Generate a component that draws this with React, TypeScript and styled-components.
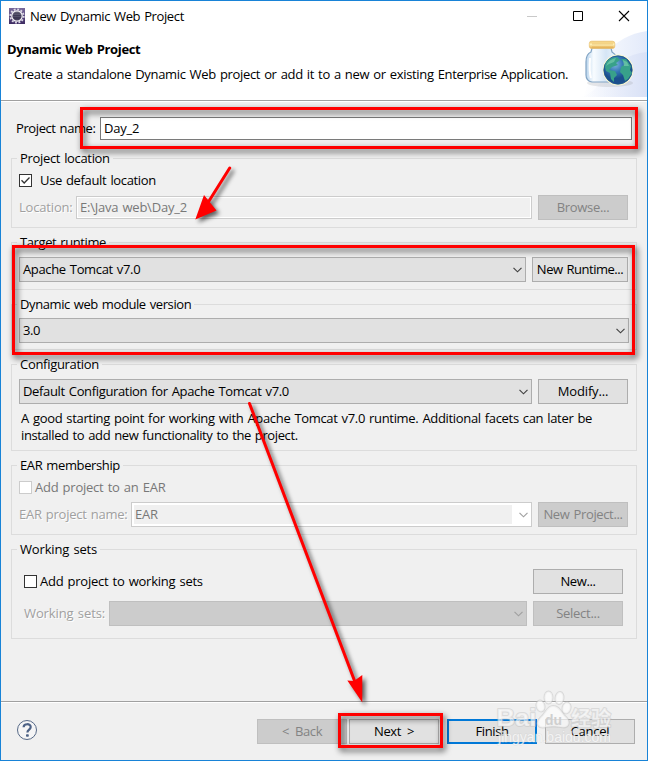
import React from "react";
import styled, { createGlobalStyle, css } from "styled-components";

const GlobalStyle = createGlobalStyle`
  * { box-sizing: border-box; }
  body { margin: 0; background: #f0f0f0; }
`;

const Window = styled.div`
  position: relative;
  display: flex;
  flex-direction: column;
  width: 648px;
  height: 761px;
  border: 1px solid #1883d7;
  background: #f0f0f0;
  color: #000;
  font: 13px/17px "Open Sans", "Noto Sans", sans-serif;
  word-spacing: 1px;
  overflow: hidden;
`;

const tracking = (value = -0.2) => `${(value - 0.18).toFixed(3)}px`;

const Text = styled.span<{ $track?: number }>`
  white-space: nowrap;
  letter-spacing: ${(p) => tracking(p.$track)};
`;

const TitleBar = styled.header`
  display: flex;
  align-items: center;
  height: 30px;
  flex: none;
  padding: 0 17px 0 8px;
  gap: 5px;
  background: #fff;
`;

const WindowControls = styled.div`
  display: flex;
  gap: 34px;
  margin: -1px 0 0 auto;
`;

const RowEnd = styled.div`
  display: flex;
  margin-left: auto;
`;

const Banner = styled.section`
  display: flex;
  justify-content: space-between;
  height: 69px;
  flex: none;
  background: #fff;
`;

const BannerCopy = styled.div`
  display: flex;
  flex-direction: column;
  padding: 10px 0 0 6px;
  gap: 8px;
`;

const Heading = styled.h1`
  margin: 0;
  font-size: 13px;
  line-height: 17px;
  font-weight: 700;
  letter-spacing: -0.36px;
`;

const Summary = styled(Text)`
  padding-left: 7px;
`;

const Rule = styled.div`
  height: 2px;
  flex: none;
  background: #fff;
  border-top: 1px solid #a0a0a0;
`;

const Body = styled.main`
  display: flex;
  flex-direction: column;
  flex: 1;
  padding: 15px 10px 0;
  gap: 14px;
`;

const NameRow = styled.div`
  display: flex;
  align-items: center;
  height: 23px;
  flex: none;
  margin-bottom: 4px;
  padding: 0 5px;
`;

const NameLabel = styled(Text)`
  width: 84px;
`;

const Field = styled.div<{ $disabled?: boolean }>`
  display: flex;
  align-items: center;
  flex: 1;
  height: 23px;
  padding-left: 3px;
  border: 1px solid ${(p) => (p.$disabled ? "#ccc" : "#7a7a7a")};
  background: ${(p) => (p.$disabled ? "#f0f0f0" : "#fff")};
  ${(p) =>
    p.$disabled &&
    css`
      color: #787878;
      box-shadow: inset 0 0 0 1px #fff;
    `}
`;

const Group = styled.section<{ $height: number; $inset?: string }>`
  display: flex;
  flex-direction: column;
  flex: none;
  width: 626px;
  height: ${(p) => p.$height}px;
  padding: ${(p) => p.$inset ?? "0 8px 0 7px"};
  border: 1px solid #dcdcdc;
`;

const Legend = styled.h2<{ $pull?: number; $track?: number }>`
  align-self: flex-start;
  margin: -10px 0 0 ${(p) => p.$pull ?? -2}px;
  padding: 0 3px;
  background: #f0f0f0;
  font-size: 13px;
  font-weight: 400;
  line-height: 18px;
  white-space: nowrap;
  letter-spacing: ${(p) => tracking(p.$track)};
`;

const Row = styled.div<{ $top: number; $height?: number; $gap?: number }>`
  display: flex;
  align-items: center;
  flex: none;
  height: ${(p) => p.$height ?? 25}px;
  margin-top: ${(p) => p.$top}px;
  gap: ${(p) => p.$gap ?? 6}px;
`;

const EmbossedLabel = styled(Text)<{ $width: number }>`
  flex: none;
  width: ${(p) => p.$width}px;
  color: #a0a0a0;
  text-shadow: 1px 1px 0 #fff;
`;

const CheckBox = styled.span<{ $disabled?: boolean }>`
  display: flex;
  width: 13px;
  height: 13px;
  flex: none;
  border: 1px solid ${(p) => (p.$disabled ? "#ccc" : "#333")};
  background: #fff;
`;

const CheckLabel = styled(Text)<{ $disabled?: boolean }>`
  color: ${(p) => (p.$disabled ? "#787878" : "#000")};
`;

const Select = styled.div<{ $disabled?: boolean }>`
  display: flex;
  align-items: center;
  justify-content: space-between;
  flex: 1;
  height: 25px;
  padding: 0 3px;
  border: 1px solid ${(p) => (p.$disabled ? "#bfbfbf" : "#adadad")};
  background: ${(p) => (p.$disabled ? "#ccc" : "#e1e1e1")};
`;

const EditableSelect = styled(Select)`
  padding: 2px 3px 2px 2px;
  border-color: #ccc;
  background: #fff;
`;

const EditArea = styled.div`
  display: flex;
  align-items: center;
  width: 378px;
  height: 19px;
  padding: 0 0 1px 1px;
  background: #f0f0f0;
  color: #787878;
`;

const Button = styled.button<{ $width?: number; $default?: boolean; $track?: number; $wide?: boolean }>`
  display: flex;
  align-items: center;
  justify-content: center;
  flex: none;
  width: ${(p) => p.$width ?? 90}px;
  height: 25px;
  padding: 0;
  border: ${(p) => (p.$default ? "2px solid #0078d7" : "1px solid #adadad")};
  border-radius: 0;
  background: #e1e1e1;
  color: #000;
  font: inherit;
  white-space: nowrap;
  word-spacing: ${(p) => (p.$wide ? 3 : 1)}px;
  letter-spacing: ${(p) => tracking(p.$track)};
  &:disabled {
    border-color: #bfbfbf;
    background: #ccc;
    color: #838383;
  }
`;

const Description = styled.p`
  display: flex;
  flex-direction: column;
  margin: 6px 0 0;
  padding-left: 2px;
`;

const Footer = styled.footer`
  display: flex;
  align-items: flex-start;
  justify-content: space-between;
  height: 57px;
  flex: none;
  padding: 16px 12px 0 15px;
`;

const FooterButtons = styled.div`
  display: flex;
  gap: 8px;
`;

const StepButtons = styled.div`
  display: flex;
  gap: 2px;
`;

const Highlight = styled.div<{ $x: number; $y: number; $w: number; $h: number }>`
  position: absolute;
  left: ${(p) => p.$x - 1}px;
  top: ${(p) => p.$y - 1}px;
  width: ${(p) => p.$w}px;
  height: ${(p) => p.$h}px;
  border: 3px solid #f00;
  filter: drop-shadow(2px 3px 3px rgba(0, 0, 0, 0.75));
  pointer-events: none;
`;

const Overlay = styled.svg`
  position: absolute;
  left: -1px;
  top: -1px;
  word-spacing: 0;
  pointer-events: none;
`;

const Arrows = styled(Overlay)`
  filter: drop-shadow(3px 3px 2px rgba(0, 0, 0, 0.6));
`;

const Chevron = ({ muted }: { muted?: boolean }) => (
  <svg width="9" height="6" viewBox="0 0 9 6" fill="none" stroke={muted ? "#a0a0a0" : "#404040"} strokeWidth="1.15">
    <path d="M.5.8 4.5 4.8 8.5.8" />
  </svg>
);

const AppIcon = () => (
  <svg width="16" height="16" viewBox="0 0 16 16">
    <defs>
      <linearGradient id="app" x2="0" y2="1">
        <stop stopColor="#786a9c" />
        <stop offset="1" stopColor="#3d2b62" />
      </linearGradient>
      <linearGradient id="core" x2="0" y2="1">
        <stop stopColor="#777589" />
        <stop offset=".5" stopColor="#282441" />
        <stop offset="1" stopColor="#514b69" />
      </linearGradient>
    </defs>
    <rect width="16" height="16" fill="url(#app)" />
    <circle cx="8" cy="8" r="6.7" fill="none" stroke="#ddd9e6" strokeWidth="1.8" strokeDasharray="1.9 1.61" />
    <circle cx="8" cy="8" r="5.2" fill="url(#core)" stroke="#f2f0f5" strokeWidth="1.3" />
    <path d="M4 6.8h8M3.8 8.7h8.4" stroke="#8c88a0" strokeWidth=".5" />
  </svg>
);

const BannerArt = () => (
  <svg width="72" height="66" viewBox="575 31 72 66">
    <defs>
      <linearGradient id="sky" x1="0" x2="1">
        <stop stopColor="#fff" />
        <stop offset="1" stopColor="#e3eafa" />
      </linearGradient>
      <linearGradient id="sky2" x1="0" x2="1">
        <stop stopColor="#eef2fc" stopOpacity="0" />
        <stop offset="1" stopColor="#d9e1f6" />
      </linearGradient>
      <linearGradient id="glass" x1="0" x2="1">
        <stop stopColor="#b9d4ec" />
        <stop offset=".25" stopColor="#f8fcff" />
        <stop offset=".65" stopColor="#d5e5f5" />
        <stop offset="1" stopColor="#eef7ff" />
      </linearGradient>
      <linearGradient id="lid" x2="0" y2="1">
        <stop stopColor="#f0c56a" />
        <stop offset=".45" stopColor="#fff0b3" />
        <stop offset="1" stopColor="#e4ab4c" />
      </linearGradient>
      <radialGradient id="sea" cx=".4" cy=".3">
        <stop stopColor="#7fb4df" />
        <stop offset=".55" stopColor="#3477b5" />
        <stop offset="1" stopColor="#1b4f8d" />
      </radialGradient>
    </defs>
    <path d="M583 97C595 62 612 36 647 31V97Z" fill="url(#sky)" />
    <path d="M580 97C603 94 607 55 647 52V97Z" fill="url(#sky2)" />
    <ellipse cx="610" cy="83" rx="23" ry="4" fill="#777" opacity=".16" />
    <path d="M592 48H611L612 52C617 55 617 59 617 64V77Q616 82 609 82H592Q586 81 586 75V62Q586 54 591 52Z" fill="url(#glass)" stroke="#83a5c5" strokeWidth="1.2" />
    <path d="M590 58Q589 72 591 78" fill="none" stroke="#fff" strokeWidth="2" />
    <rect x="589.3" y="41.2" width="25.5" height="7.3" rx="2.3" fill="url(#lid)" stroke="#e9c271" strokeWidth=".7" />
    <path d="M592 44H613M592 47H613" stroke="#d89e3c" strokeWidth=".7" opacity=".65" />
    <circle cx="618" cy="70" r="15.4" fill="#faf7cf" />
    <circle cx="618" cy="70" r="14.2" fill="url(#sea)" stroke="#1d568c" strokeWidth=".8" />
    <path d="M605 67Q605 60 612 58L617 57 620 60 616 63 618 65 612 67 609 70 615 71 617 75 614 78 614 82 611 79 610 73 606 71ZM621 59 626 59 631 66 630 70 632 73 628 79 625 81 623 75 620 72 621 67 625 64Z" fill="#38a18a" />
    <path d="M606 66Q609 59 616 58L614 62 609 64ZM623 60 627 62 629 66 624 66Z" fill="#7bd0af" opacity=".65" />
  </svg>
);

const HelpIcon = () => (
  <svg width="22" height="22" viewBox="0 0 22 22" fill="none">
    <circle cx="11" cy="11" r="9.5" fill="#f5f5f6" stroke="#566987" />
    <path d="M7.6 8.3C7.7 4.2 14.7 4.3 14.7 8 14.7 10.6 11.4 10.6 11.4 13.6" stroke="#4d6286" strokeWidth="2.2" />
    <rect x="10" y="15.3" width="2.8" height="2.4" rx=".8" fill="#4d6286" />
  </svg>
);

const Watermark = () => (
  <Overlay width="648" height="761" viewBox="0 0 648 761">
    <g fill="#fff" fillOpacity=".6" stroke="#c4c4c4" strokeOpacity=".5" strokeWidth="2" strokeLinejoin="round" paintOrder="stroke">
      <text x="496.5" y="725.5" fontFamily="Liberation Sans, sans-serif" fontWeight="700" fontSize="24.5" textLength="40" lengthAdjust="spacingAndGlyphs">Bai</text>
      <ellipse cx="540.5" cy="706" rx="4" ry="5.5" transform="rotate(-15 540.5 706)" />
      <ellipse cx="548.5" cy="697.5" rx="4" ry="6" />
      <ellipse cx="559.5" cy="698" rx="4" ry="6" transform="rotate(8 559.5 698)" />
      <ellipse cx="566.5" cy="708" rx="4" ry="5.5" transform="rotate(15 566.5 708)" />
      <path d="M553 706C547 706 546 713 541 717 534 724 539 729 546 727 552 726 555 726 561 727 569 729 571 722 566 717 561 713 560 706 553 706Z" />
      <text x="571" y="726" fontFamily="Noto Sans CJK SC, sans-serif" fontWeight="700" fontSize="20" textLength="40">经验</text>
    </g>
    <text x="545" y="724.5" fontFamily="Liberation Sans, sans-serif" fontWeight="700" fontSize="15" fill="#cfcfcf" textLength="17" lengthAdjust="spacingAndGlyphs">du</text>
    <text x="498" y="741.5" fontFamily="Liberation Sans, sans-serif" fontSize="14" fill="#fff" fillOpacity=".7" stroke="#ccc" strokeOpacity=".4" strokeWidth="1" paintOrder="stroke" textLength="113">jingyan.baidu.com</text>
  </Overlay>
);

export default function App() {
  return (
    <>
      <GlobalStyle />
      <Window>
        <TitleBar>
          <AppIcon />
          <Text>New Dynamic Web Project</Text>
          <WindowControls>
            <svg width="12" height="12" viewBox="0 0 12 12"><path d="M1 6.5h10" stroke="#c9c9c9" /></svg>
            <svg width="12" height="12" viewBox="0 0 12 12"><path d="M1.5 1.5h9v9h-9z" fill="none" stroke="#000" /></svg>
            <svg width="12" height="12" viewBox="0 0 12 12"><path d="m1 1 10 10M11 1 1 11" stroke="#000" strokeWidth="1.1" /></svg>
          </WindowControls>
        </TitleBar>
        <Banner>
          <BannerCopy>
            <Heading>Dynamic Web Project</Heading>
            <Summary $track={-0.154}>Create a standalone Dynamic Web project or add it to a new or existing Enterprise Application.</Summary>
          </BannerCopy>
          <BannerArt />
        </Banner>
        <Rule />

        <Body>
          <NameRow>
            <NameLabel $track={-0.22}>Project name:</NameLabel>
            <Field><Text $track={-0.05}>Day_2</Text></Field>
          </NameRow>

          <Group $height={70}>
            <Legend $track={-0.15}>Project location</Legend>
            <Row $top={5} $height={17} $gap={8}>
              <CheckBox>
                <svg width="11" height="11" viewBox="0 0 11 11"><path d="M1.5 5.2 4.2 8 9.5 2.5" fill="none" stroke="#333" strokeWidth="1.3" /></svg>
              </CheckBox>
              <CheckLabel $track={-0.16}>Use default location</CheckLabel>
            </Row>
            <Row $top={6}>
              <EmbossedLabel $width={51} $track={0}>Location:</EmbossedLabel>
              <Field $disabled><Text $track={-0.04}>E:\Java web\Day_2</Text></Field>
              <Button disabled $track={-0.12}>Browse...</Button>
            </Row>
          </Group>

          <Group $height={48}>
            <Legend $track={-0.22}>Target runtime</Legend>
            <Row $top={6}>
              <Select><Text $track={-0.17}>Apache Tomcat v7.0</Text><Chevron /></Select>
              <Button $width={96} $track={-0.3}>New Runtime...</Button>
            </Row>
          </Group>

          <Group $height={46} $inset="0 7px">
            <Legend $track={-0.23}>Dynamic web module version</Legend>
            <Row $top={5}>
              <Select><Text>3.0</Text><Chevron /></Select>
            </Row>
          </Group>

          <Group $height={87}>
            <Legend $track={-0.12}>Configuration</Legend>
            <Row $top={6}>
              <Select><Text $track={-0.17}>Default Configuration for Apache Tomcat v7.0</Text><Chevron /></Select>
              <Button $track={0}>Modify...</Button>
            </Row>
            <Description>
              <Text $track={-0.15}>A good starting point for working with Apache Tomcat v7.0 runtime. Additional facets can later be</Text>
              <Text $track={-0.21}>installed to add new functionality to the project.</Text>
            </Description>
          </Group>

          <Group $height={70}>
            <Legend $track={-0.2}>EAR membership</Legend>
            <Row $top={5} $height={17} $gap={3}>
              <CheckBox $disabled />
              <CheckLabel $disabled $track={-0.05}>Add project to an EAR</CheckLabel>
            </Row>
            <Row $top={6}>
              <EmbossedLabel $width={106} $track={-0.07}>EAR project name:</EmbossedLabel>
              <EditableSelect>
                <EditArea><Text $track={0}>EAR</Text></EditArea>
                <Chevron muted />
              </EditableSelect>
              <Button disabled $track={-0.18}>New Project...</Button>
            </Row>
          </Group>

          <Group $height={90} $inset="0 13px 0 12px">
            <Legend $pull={-7} $track={0.02}>Working sets</Legend>
            <Row $top={11} $gap={3}>
              <CheckBox />
              <CheckLabel $track={-0.06}>Add project to working sets</CheckLabel>
              <RowEnd><Button>New...</Button></RowEnd>
            </Row>
            <Row $top={7}>
              <EmbossedLabel $width={79} $track={0.08}>Working sets:</EmbossedLabel>
              <Select $disabled><span /><Chevron muted /></Select>
              <Button disabled $track={-0.1}>Select...</Button>
            </Row>
          </Group>
        </Body>

        <Rule />
        <Footer>
          <HelpIcon />
          <FooterButtons>
            <StepButtons>
              <Button disabled $wide>&lt; Back</Button>
              <Button $wide>Next &gt;</Button>
            </StepButtons>
            <Button $default $track={-0.2}>Finish</Button>
            <Button $track={-0.05}>Cancel</Button>
          </FooterButtons>
        </Footer>

        <Watermark />
        <Highlight $x={80} $y={107} $w={558} $h={42} />
        <Highlight $x={12} $y={245} $w={623} $h={110} />
        <Highlight $x={338} $y={713} $w={105} $h={35} />
        <Arrows width="648" height="761" viewBox="0 0 648 761">
          <g stroke="#f00" strokeWidth="3" strokeLinecap="round">
            <path d="M229.7 168 209 201M249.5 403.5 355 682" />
          </g>
          <path d="M195.3 219.5 204 195 208.5 200.5 216.500 210.5ZM362.3 702.5 347.3 680.5 354 681 362.3 675Z" fill="#f00" />
        </Arrows>
      </Window>
    </>
  );
}
